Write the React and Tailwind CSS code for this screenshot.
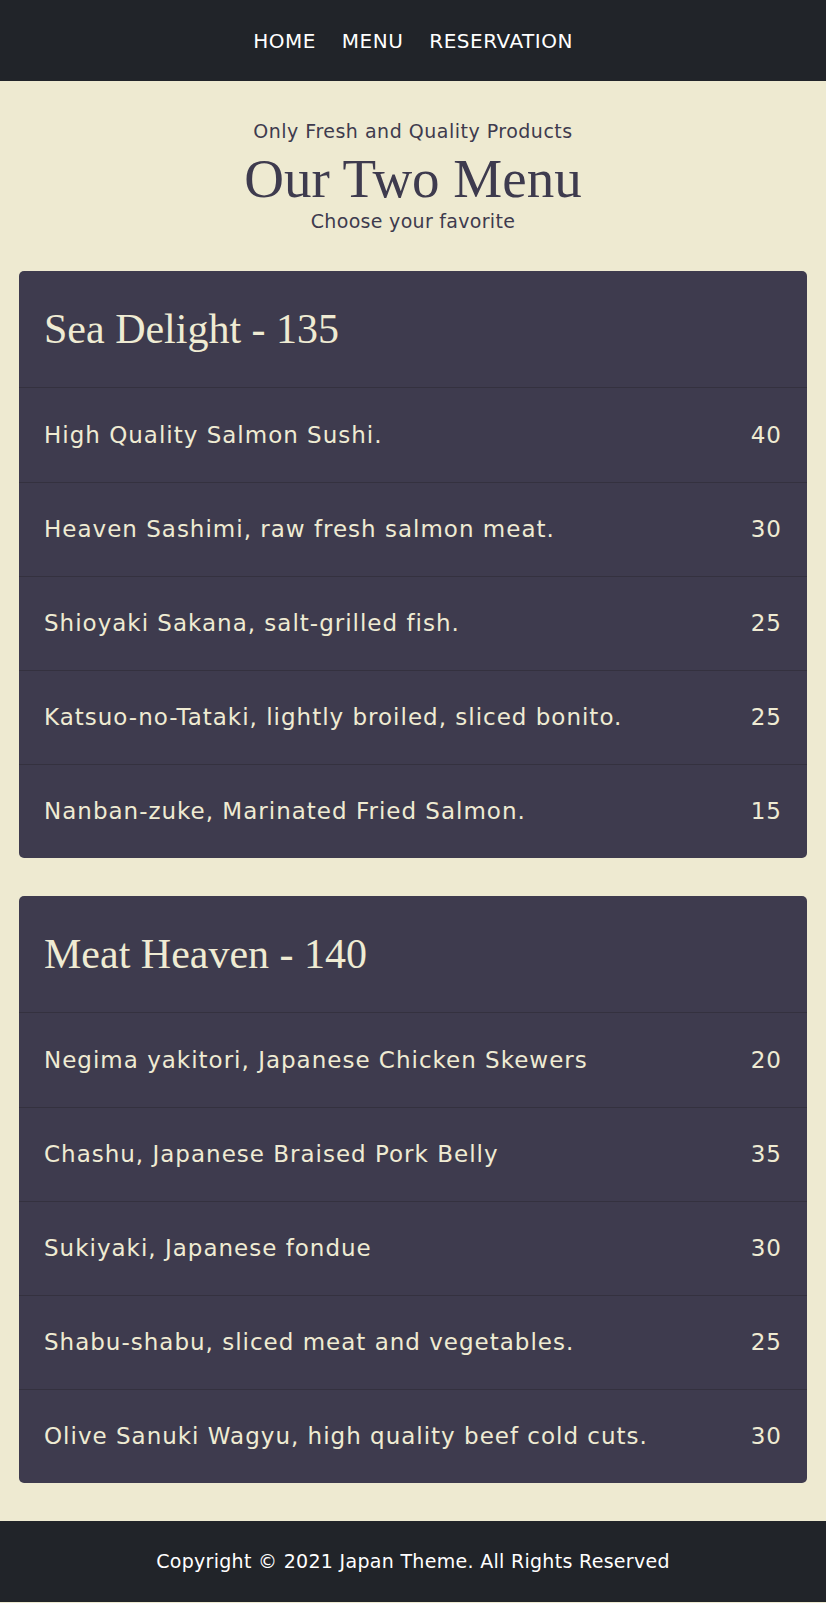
const seaDelight = [
  ["High Quality Salmon Sushi.", 40],
  ["Heaven Sashimi, raw fresh salmon meat.", 30],
  ["Shioyaki Sakana, salt-grilled fish.", 25],
  ["Katsuo-no-Tataki, lightly broiled, sliced bonito.", 25],
  ["Nanban-zuke, Marinated Fried Salmon.", 15],
];

const meatHeaven = [
  ["Negima yakitori, Japanese Chicken Skewers", 20],
  ["Chashu, Japanese Braised Pork Belly", 35],
  ["Sukiyaki, Japanese fondue", 30],
  ["Shabu-shabu, sliced meat and vegetables.", 25],
  ["Olive Sanuki Wagyu, high quality beef cold cuts.", 30],
];

function MenuCard({ title, items }) {
  return (
    <div className="bg-[#3e3b4e] rounded-[5px] text-[#efebd3]">
      <div className="h-[117px] flex items-center px-[25px] border-b border-[#34313f]">
        <h2 className="font-['Liberation_Serif',serif] text-[42px] leading-none">
          {title}
        </h2>
      </div>
      {items.map(([name, price], k) => (
        <div
          key={k}
          className={
            "h-[94px] flex items-center justify-between px-[25px] text-[23px] tracking-[1px] " +
            (k > 0 ? "border-t border-[#34313f]" : "")
          }
        >
          <span>{name}</span>
          <span>{price}</span>
        </div>
      ))}
    </div>
  );
}

export default function App() {
  return (
    <div className="min-h-screen bg-[#eeead1] font-['DejaVu_Sans',sans-serif]">
      <nav className="h-[81px] bg-[#212429] flex items-center justify-center gap-[26px] text-white text-[20px] tracking-[0.5px]">
        <a href="#">HOME</a>
        <a href="#">MENU</a>
        <a href="#">RESERVATION</a>
      </nav>

      <div className="pt-[38px] pb-[38px] px-[19px]">
        <div className="text-center text-[#3e3b4e]">
          <p className="text-[19px] leading-[24px] tracking-[0.5px]">Only Fresh and Quality Products</p>
          <h1 className="mt-[6px] font-['Liberation_Serif',serif] text-[55px] leading-[60px]">
            Our Two Menu
          </h1>
          <p className="text-[19px] leading-[24px] tracking-[0.3px]">Choose your favorite</p>
        </div>

        <div className="mt-[38px] flex flex-col gap-[38px]">
          <MenuCard title="Sea Delight - 135" items={seaDelight} />
          <MenuCard title="Meat Heaven - 140" items={meatHeaven} />
        </div>
      </div>

      <footer className="h-[81px] bg-[#212429] flex items-center justify-center text-white text-[19px] tracking-[0.3px]">
        Copyright © 2021 Japan Theme. All Rights Reserved
      </footer>
    </div>
  );
}
